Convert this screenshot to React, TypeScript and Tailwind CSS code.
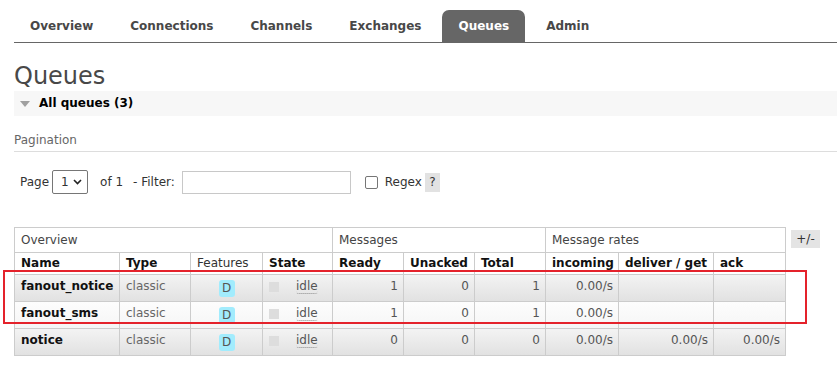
import React from "react";

const TABS = ["Overview", "Connections", "Channels", "Exchanges", "Queues", "Admin"];

type Queue = {
  name: string;
  ready: number;
  unacked: number;
  total: number;
  incoming: string;
  deliver: string;
  ack: string;
};

const QUEUES: Queue[] = [
  { name: "fanout_notice", ready: 1, unacked: 0, total: 1, incoming: "0.00/s", deliver: "", ack: "" },
  { name: "fanout_sms", ready: 1, unacked: 0, total: 1, incoming: "0.00/s", deliver: "", ack: "" },
  { name: "notice", ready: 0, unacked: 0, total: 0, incoming: "0.00/s", deliver: "0.00/s", ack: "0.00/s" },
];

const cell = "border border-[#cccccc] px-[6px] align-middle";
const body = "border border-[#cccccc] px-[6px] pb-[3px] align-middle";
const num = "border border-[#cccccc] pr-[5px] pb-[3px] text-right align-middle text-[#555]";

function Nav() {
  return (
    <div className="flex items-end gap-[5px] border-b border-[#666666] pt-[10px]">
      {TABS.map((t) => (
        <div
          key={t}
          className={`flex h-[32px] items-center rounded-t-[7px] px-4 font-bold ${
            t === "Queues" ? "bg-[#666666] text-white" : "text-[#484848]"
          }`}
        >
          {t}
        </div>
      ))}
    </div>
  );
}

function Pagination() {
  return (
    <div className="mt-[18px] flex h-[24px] items-center pl-[6px] text-[#333]">
      <span>Page</span>
      <div className="ml-[3px] flex h-[24px] w-[36px] items-center justify-between rounded-[2px] border border-[#767676] bg-white pl-[8px] pr-[5px]">
        <span>1</span>
        <svg width="9" height="6" viewBox="0 0 9 6">
          <path d="M1 1l3.5 3.5L8 1" stroke="#222" strokeWidth="1.6" fill="none" />
        </svg>
      </div>
      <span className="ml-[12px]">of 1</span>
      <span className="ml-[10px]">- Filter:</span>
      <div className="ml-[7px] h-[23px] w-[169px] border border-[#c8c8c8] bg-white" />
      <div className="ml-[14px] h-[13px] w-[13px] rounded-[2px] border border-[#767676] bg-white" />
      <span className="ml-[7px]">Regex</span>
      <span className="ml-[3px] flex h-[19px] w-[15px] items-center justify-center bg-[#e2e2e2]">?</span>
    </div>
  );
}

function QueueTable() {
  return (
    <table className="w-[771px] table-fixed border-collapse">
      <colgroup>
        <col className="w-[105px]" />
        <col className="w-[71px]" />
        <col className="w-[72px]" />
        <col className="w-[70px]" />
        <col className="w-[71px]" />
        <col className="w-[71px]" />
        <col className="w-[71px]" />
        <col className="w-[73px]" />
        <col className="w-[95px]" />
        <col className="w-[72px]" />
      </colgroup>
      <thead>
        <tr className="h-[25px] bg-white text-left text-[#444]">
          <th colSpan={4} className={`${cell} font-normal`}>Overview</th>
          <th colSpan={3} className={`${cell} font-normal`}>Messages</th>
          <th colSpan={3} className={`${cell} font-normal`}>Message rates</th>
        </tr>
        <tr className="h-[22px] bg-white text-left text-[#111]">
          <th className={`${cell} font-bold`}>Name</th>
          <th className={`${cell} font-bold`}>Type</th>
          <th className={`${cell} font-normal text-[#333]`}>Features</th>
          <th className={`${cell} font-bold`}>State</th>
          <th className={`${cell} font-bold`}>Ready</th>
          <th className={`${cell} font-bold`}>Unacked</th>
          <th className={`${cell} font-bold`}>Total</th>
          <th className={`${cell} font-bold`}>incoming</th>
          <th className={`${cell} whitespace-nowrap font-bold`}>deliver / get</th>
          <th className={`${cell} font-bold`}>ack</th>
        </tr>
      </thead>
      <tbody>
        {QUEUES.map((q, i) => (
          <tr
            key={q.name}
            className={`h-[27px] ${
              i % 2 === 0
                ? "bg-linear-to-b from-[#f3f3f3] to-[#e1e1e1]"
                : "bg-linear-to-b from-[#fdfdfd] to-[#f5f5f5]"
            }`}
          >
            <td className={`${body} font-bold text-[#111]`}>{q.name}</td>
            <td className={`${body} text-[#666]`}>classic</td>
            <td className={`${cell} text-center`}>
              <span className="inline-flex h-[17px] w-[16px] items-center justify-center rounded-[3px] bg-[#a2ecfd] text-[#555]">
                D
              </span>
            </td>
            <td className={body}>
              <div className="flex items-center">
                <span className="h-[10px] w-[10px] bg-[#dddddd]" />
                <span className="ml-[17px] rounded-b-[3px] border-b border-dotted border-[#888] leading-[14px] text-[#555]">
                  idle
                </span>
              </div>
            </td>
            <td className={num}>{q.ready}</td>
            <td className={num}>{q.unacked}</td>
            <td className={num}>{q.total}</td>
            <td className={num}>{q.incoming}</td>
            <td className={num}>{q.deliver}</td>
            <td className={num}>{q.ack}</td>
          </tr>
        ))}
      </tbody>
    </table>
  );
}

export default function App() {
  return (
    <div
      className="relative min-h-[374px] bg-white pl-[14px] text-[12px] leading-[15px]"
      style={{ fontFamily: '"DejaVu Sans", Verdana, sans-serif' }}
    >
      <Nav />
      <h1 className="mt-[19px] text-[24px] font-normal leading-[28px] text-[#484848]">Queues</h1>
      <div className="mt-[1px] flex h-[25px] items-center bg-[#f7f7f7]">
        <svg className="ml-[6px]" width="10" height="6" viewBox="0 0 10 6">
          <path d="M0 0h10L5 6z" fill="#a0a0a0" />
        </svg>
        <span className="ml-[9px] font-bold text-black">All queues (3)</span>
      </div>
      <div className="mt-[17px] border-b border-[#dddddd] pb-[3px] text-[#666]">Pagination</div>
      <Pagination />
      <div className="mt-[33px] flex items-start">
        <QueueTable />
        <div className="ml-[5px] mt-[3px] flex h-[18px] w-[29px] items-center justify-center bg-[#e4e4e4] text-[#333]">
          +/-
        </div>
      </div>
      <div className="pointer-events-none absolute left-[3px] top-[270px] h-[54px] w-[804px] border-2 border-[#e4222b]" />
    </div>
  );
}
